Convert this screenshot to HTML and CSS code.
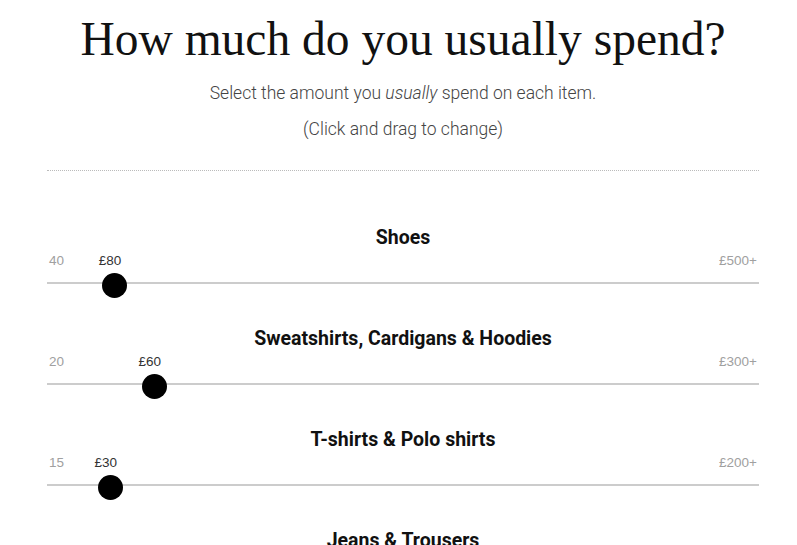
FILE: index.html
```html
<!DOCTYPE html>
<html>
<head>
<meta charset="utf-8">
<link rel="stylesheet" href="styles.css">
</head>
<body>
<main class="page">
  <header class="intro">
    <h1 class="title">How much do you usually spend?</h1>
    <p class="lead">Select the amount you <em>usually</em> spend on each item.</p>
    <p class="lead">(Click and drag to change)</p>
  </header>
  <section class="sliders">
    <div class="slider">
      <h2 class="slider-name">Shoes</h2>
      <div class="scale">
        <span class="min">40</span>
        <span class="value" style="left: 8.7%">£80</span>
        <span class="max">£500+</span>
      </div>
      <div class="track"><span class="knob" style="left: 8.7%"></span></div>
    </div>
    <div class="slider">
      <h2 class="slider-name">Sweatshirts, Cardigans &amp; Hoodies</h2>
      <div class="scale">
        <span class="min">20</span>
        <span class="value" style="left: 14.29%">£60</span>
        <span class="max">£300+</span>
      </div>
      <div class="track"><span class="knob" style="left: 14.29%"></span></div>
    </div>
    <div class="slider">
      <h2 class="slider-name">T-shirts &amp; Polo shirts</h2>
      <div class="scale">
        <span class="min">15</span>
        <span class="value" style="left: 8.11%">£30</span>
        <span class="max">£200+</span>
      </div>
      <div class="track"><span class="knob" style="left: 8.11%"></span></div>
    </div>
    <div class="slider">
      <h2 class="slider-name">Jeans &amp; Trousers</h2>
      <div class="scale">
        <span class="min">20</span>
        <span class="value" style="left: 12%">£50</span>
        <span class="max">£300+</span>
      </div>
      <div class="track"><span class="knob" style="left: 12%"></span></div>
    </div>
  </section>
</main>
</body>
</html>
```
FILE: styles.css
```css
html, body {
  margin: 0;
  padding: 0;
  background: #fff;
}
.page {
  width: 712px;
  margin-left: 47px;
}
.intro {
  text-align: center;
  border-bottom: 1px dotted #bbb;
  padding-bottom: 23px;
}
.title {
  margin: 0;
  padding-top: 10px;
  font-family: "Liberation Serif", serif;
  font-weight: normal;
  font-size: 47.5px;
  line-height: 58px;
  color: #111;
}
.lead {
  margin: 0;
  font-family: Roboto, sans-serif;
  font-size: 17.5px;
  line-height: 36px;
  color: #444;
  font-weight: 300;
}
.lead:first-of-type {
  margin-top: 7px;
}
.lead em {
  font-style: italic;
}
.sliders {
  padding-top: 56px;
}
.slider {
  height: 101px;
}
.slider-name {
  margin: 0;
  text-align: center;
  font-family: Roboto, sans-serif;
  font-weight: bold;
  font-size: 19.5px;
  line-height: 22px;
  color: #111;
}
.scale {
  position: relative;
  display: flex;
  justify-content: space-between;
  padding: 0 2px;
  height: 33px;
  font-family: "Liberation Sans", sans-serif;
  font-size: 13.5px;
  line-height: 24px;
  color: #a0a0a0;
}
.scale .value {
  position: absolute;
  top: 0;
  color: #333;
  transform: translateX(-50%);
  margin-left: 1px;
}
.track {
  position: relative;
  height: 2px;
  background: #ccc;
}
.knob {
  position: absolute;
  top: -9px;
  width: 25px;
  height: 25px;
  margin-left: -6.5px;
  border-radius: 50%;
  background: #000;
}
```
